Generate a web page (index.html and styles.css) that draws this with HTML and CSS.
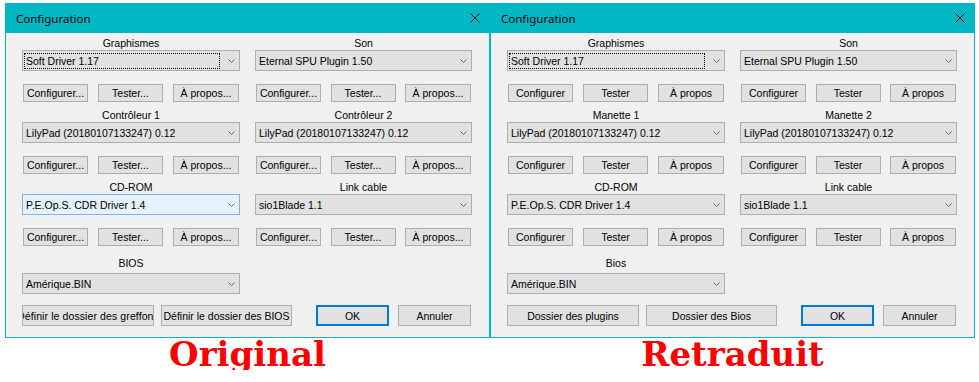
FILE: index.html
```html
<!DOCTYPE html>
<html lang="fr">
<head>
<meta charset="utf-8">
<title>Configuration</title>
<link rel="stylesheet" href="styles.css">
</head>
<body>
<div class="page">

  <div class="pane">
    <div class="window">
      <div class="titlebar">
        <span class="title">Configuration</span>
        <svg class="close" viewBox="0 0 10 10"><path d="M0.5 0.5 L9.5 9.5 M9.5 0.5 L0.5 9.5"/></svg>
      </div>
      <div class="body">
        <div class="grid">
          <div class="group">
            <div class="label">Graphismes</div>
            <div class="combo focused"><span class="value">Soft Driver 1.17</span><svg class="chev" viewBox="0 0 7 4"><polyline points="0.5,0.5 3.5,3.5 6.5,0.5"/></svg></div>
            <div class="buttons"><div class="btn">Configurer...</div><div class="btn">Tester...</div><div class="btn wide">À propos...</div></div>
          </div>
          <div class="group">
            <div class="label">Son</div>
            <div class="combo"><span class="value">Eternal SPU Plugin 1.50</span><svg class="chev" viewBox="0 0 7 4"><polyline points="0.5,0.5 3.5,3.5 6.5,0.5"/></svg></div>
            <div class="buttons"><div class="btn">Configurer...</div><div class="btn">Tester...</div><div class="btn wide">À propos...</div></div>
          </div>
          <div class="group">
            <div class="label">Contrôleur 1</div>
            <div class="combo"><span class="value">LilyPad (20180107133247) 0.12</span><svg class="chev" viewBox="0 0 7 4"><polyline points="0.5,0.5 3.5,3.5 6.5,0.5"/></svg></div>
            <div class="buttons"><div class="btn">Configurer...</div><div class="btn">Tester...</div><div class="btn wide">À propos...</div></div>
          </div>
          <div class="group">
            <div class="label">Contrôleur 2</div>
            <div class="combo"><span class="value">LilyPad (20180107133247) 0.12</span><svg class="chev" viewBox="0 0 7 4"><polyline points="0.5,0.5 3.5,3.5 6.5,0.5"/></svg></div>
            <div class="buttons"><div class="btn">Configurer...</div><div class="btn">Tester...</div><div class="btn wide">À propos...</div></div>
          </div>
          <div class="group">
            <div class="label">CD-ROM</div>
            <div class="combo hot"><span class="value">P.E.Op.S. CDR Driver 1.4</span><svg class="chev" viewBox="0 0 7 4"><polyline points="0.5,0.5 3.5,3.5 6.5,0.5"/></svg></div>
            <div class="buttons"><div class="btn">Configurer...</div><div class="btn">Tester...</div><div class="btn wide">À propos...</div></div>
          </div>
          <div class="group">
            <div class="label">Link cable</div>
            <div class="combo"><span class="value">sio1Blade 1.1</span><svg class="chev" viewBox="0 0 7 4"><polyline points="0.5,0.5 3.5,3.5 6.5,0.5"/></svg></div>
            <div class="buttons"><div class="btn">Configurer...</div><div class="btn">Tester...</div><div class="btn wide">À propos...</div></div>
          </div>
        </div>
        <div class="bios">
          <div class="label">BIOS</div>
          <div class="combo"><span class="value">Amérique.BIN</span><svg class="chev" viewBox="0 0 7 4"><polyline points="0.5,0.5 3.5,3.5 6.5,0.5"/></svg></div>
        </div>
        <div class="footer">
          <div class="btn folder1"><span class="overflow-text">Définir le dossier des greffons</span></div>
          <div class="btn folder2"><span>Définir le dossier des BIOS</span></div>
          <div class="btn ok default">OK</div>
          <div class="btn cancel">Annuler</div>
        </div>
      </div>
    </div>
    <div class="caption">Original</div>
  </div>

  <div class="pane">
    <div class="window">
      <div class="titlebar">
        <span class="title">Configuration</span>
        <svg class="close" viewBox="0 0 10 10"><path d="M0.5 0.5 L9.5 9.5 M9.5 0.5 L0.5 9.5"/></svg>
      </div>
      <div class="body">
        <div class="grid">
          <div class="group">
            <div class="label">Graphismes</div>
            <div class="combo focused"><span class="value">Soft Driver 1.17</span><svg class="chev" viewBox="0 0 7 4"><polyline points="0.5,0.5 3.5,3.5 6.5,0.5"/></svg></div>
            <div class="buttons"><div class="btn">Configurer</div><div class="btn">Tester</div><div class="btn wide">À propos</div></div>
          </div>
          <div class="group">
            <div class="label">Son</div>
            <div class="combo"><span class="value">Eternal SPU Plugin 1.50</span><svg class="chev" viewBox="0 0 7 4"><polyline points="0.5,0.5 3.5,3.5 6.5,0.5"/></svg></div>
            <div class="buttons"><div class="btn">Configurer</div><div class="btn">Tester</div><div class="btn wide">À propos</div></div>
          </div>
          <div class="group">
            <div class="label">Manette 1</div>
            <div class="combo"><span class="value">LilyPad (20180107133247) 0.12</span><svg class="chev" viewBox="0 0 7 4"><polyline points="0.5,0.5 3.5,3.5 6.5,0.5"/></svg></div>
            <div class="buttons"><div class="btn">Configurer</div><div class="btn">Tester</div><div class="btn wide">À propos</div></div>
          </div>
          <div class="group">
            <div class="label">Manette 2</div>
            <div class="combo"><span class="value">LilyPad (20180107133247) 0.12</span><svg class="chev" viewBox="0 0 7 4"><polyline points="0.5,0.5 3.5,3.5 6.5,0.5"/></svg></div>
            <div class="buttons"><div class="btn">Configurer</div><div class="btn">Tester</div><div class="btn wide">À propos</div></div>
          </div>
          <div class="group">
            <div class="label">CD-ROM</div>
            <div class="combo"><span class="value">P.E.Op.S. CDR Driver 1.4</span><svg class="chev" viewBox="0 0 7 4"><polyline points="0.5,0.5 3.5,3.5 6.5,0.5"/></svg></div>
            <div class="buttons"><div class="btn">Configurer</div><div class="btn">Tester</div><div class="btn wide">À propos</div></div>
          </div>
          <div class="group">
            <div class="label">Link cable</div>
            <div class="combo"><span class="value">sio1Blade 1.1</span><svg class="chev" viewBox="0 0 7 4"><polyline points="0.5,0.5 3.5,3.5 6.5,0.5"/></svg></div>
            <div class="buttons"><div class="btn">Configurer</div><div class="btn">Tester</div><div class="btn wide">À propos</div></div>
          </div>
        </div>
        <div class="bios">
          <div class="label">Bios</div>
          <div class="combo"><span class="value">Amérique.BIN</span><svg class="chev" viewBox="0 0 7 4"><polyline points="0.5,0.5 3.5,3.5 6.5,0.5"/></svg></div>
        </div>
        <div class="footer">
          <div class="btn folder1"><span>Dossier des plugins</span></div>
          <div class="btn folder2"><span>Dossier des Bios</span></div>
          <div class="btn ok default">OK</div>
          <div class="btn cancel">Annuler</div>
        </div>
      </div>
    </div>
    <div class="caption">Retraduit</div>
  </div>

</div>
</body>
</html>
```

FILE: styles.css
```css
* { box-sizing: border-box; }

html, body {
  margin: 0;
  padding: 0;
  background: #ffffff;
}

body {
  font-family: "Liberation Sans", Arial, sans-serif;
  font-size: 10.5px;
  color: #000;
}

.page {
  display: flex;
  padding: 3px 0 0 5px;
}

.pane {
  width: 485px;
  display: flex;
  flex-direction: column;
}

.titlebar {
  height: 30px;
  background: #00b7c3;
  display: flex;
  align-items: center;
  padding: 0 10px 0 11px;
}

.title {
  flex: 1;
  font-family: "Noto Sans", "Open Sans", sans-serif;
  font-size: 11.5px;
  color: #000;
}

.close {
  width: 10px;
  height: 10px;
  flex: none;
}

.close path {
  stroke: #000;
  stroke-width: 1;
  fill: none;
}

.body {
  background: #f0f0f0;
  border: 1px solid #00b7c3;
  border-top: 0;
  padding: 3px 0 11px 16px;
}

.grid {
  display: grid;
  grid-template-columns: 218px 217px;
  column-gap: 15px;
  row-gap: 6px;
}

.label {
  height: 14px;
  line-height: 14px;
  text-align: center;
  white-space: nowrap;
}

.combo {
  height: 21px;
  border: 1px solid #adadad;
  background: #e1e1e1;
  display: flex;
  align-items: center;
}

.combo.hot {
  border-color: #7eb4ea;
  background: #e5f1fb;
}

.value {
  flex: 1;
  min-width: 0;
  height: 16px;
  margin-left: 1px;
  padding-left: 1px;
  border: 1px solid transparent;
  line-height: 14px;
  white-space: nowrap;
  overflow: hidden;
}

.combo.focused .value {
  border: 1px dotted #000;
}

.chev {
  flex: none;
  width: 7px;
  height: 4px;
  margin: 0 4px 0 8px;
}

.chev polyline {
  fill: none;
  stroke: #6a6a6a;
  stroke-width: 1;
}

.buttons {
  display: flex;
  justify-content: space-between;
  padding: 0 1px;
  margin-top: 13px;
}

.btn {
  height: 18px;
  width: 65px;
  border: 1px solid #adadad;
  background: #e1e1e1;
  display: flex;
  align-items: center;
  justify-content: center;
  white-space: nowrap;
  overflow: hidden;
  flex: none;
}

.btn.wide { width: 66px; }

.bios {
  width: 218px;
  margin-top: 10px;
}

.bios .combo { margin-top: 3px; }

.footer {
  display: flex;
  margin-top: 11px;
}

.footer .btn { height: 21px; }

.overflow-text {
  flex: none;
  letter-spacing: 0.1px;
}

.folder1 { width: 132px; }
.folder2 { width: 131px; margin-left: 7px; }
.ok { width: 73px; margin-left: 24px; }
.cancel { width: 73px; margin-left: 9px; }

.btn.default {
  border: 2px solid #0078d7;
}

.caption {
  text-align: center;
  font-family: "DejaVu Serif", "Liberation Serif", serif;
  font-weight: bold;
  font-size: 34px;
  line-height: 32px;
  color: #f00;
}
```
